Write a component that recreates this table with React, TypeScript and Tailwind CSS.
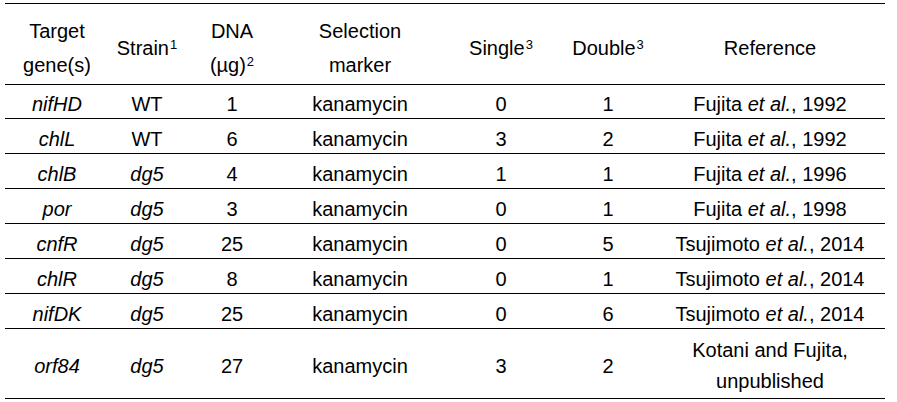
import React from 'react';

type Row = {
  gene: string;
  strain: string;
  dna: string;
  single: string;
  double: string;
  ref: React.ReactNode;
  tall?: boolean;
};

const fujita = (year: string) => (
  <>
    Fujita <i>et al.</i>, {year}
  </>
);

const tsuji = (
  <>
    Tsujimoto <i>et al.</i>, 2014
  </>
);

const rows: Row[] = [
  { gene: 'nifHD', strain: 'WT', dna: '1', single: '0', double: '1', ref: fujita('1992') },
  { gene: 'chlL', strain: 'WT', dna: '6', single: '3', double: '2', ref: fujita('1992') },
  { gene: 'chlB', strain: 'dg5', dna: '4', single: '1', double: '1', ref: fujita('1996') },
  { gene: 'por', strain: 'dg5', dna: '3', single: '0', double: '1', ref: fujita('1998') },
  { gene: 'cnfR', strain: 'dg5', dna: '25', single: '0', double: '5', ref: tsuji },
  { gene: 'chlR', strain: 'dg5', dna: '8', single: '0', double: '1', ref: tsuji },
  { gene: 'nifDK', strain: 'dg5', dna: '25', single: '0', double: '6', ref: tsuji },
  {
    gene: 'orf84',
    strain: 'dg5',
    dna: '27',
    single: '3',
    double: '2',
    ref: (
      <span className="block leading-[31px]">
        Kotani and Fujita,
        <br />
        unpublished
      </span>
    ),
    tall: true,
  },
];

function Sup({ n }: { n: string }) {
  return <sup className="text-[13px] leading-none -top-[6px] ml-[1px]">{n}</sup>;
}

export default function App() {
  return (
    <div className="w-[897px] h-[402px] bg-white text-black font-['Liberation_Sans',Arial,sans-serif] text-[20px] leading-[24px] pl-[5px] pt-[3px]">
      <table className="w-[880px] table-fixed border-collapse text-center">
        <colgroup>
          <col className="w-[104px]" />
          <col className="w-[76px]" />
          <col className="w-[94px]" />
          <col className="w-[162px]" />
          <col className="w-[120px]" />
          <col className="w-[94px]" />
          <col className="w-[230px]" />
        </colgroup>
        <thead>
          <tr className="border-t border-b border-black h-[81px] leading-[34px]">
            <th className="font-normal pt-[8px]">
              Target
              <br />
              gene(s)
            </th>
            <th className="font-normal pt-[8px]">
              Strain<Sup n="1" />
            </th>
            <th className="font-normal pt-[8px]">
              DNA
              <br />
              (µg)<Sup n="2" />
            </th>
            <th className="font-normal pt-[8px]">
              Selection
              <br />
              marker
            </th>
            <th className="font-normal pt-[8px]">
              Single<Sup n="3" />
            </th>
            <th className="font-normal pt-[8px]">
              Double<Sup n="3" />
            </th>
            <th className="font-normal pt-[8px]">Reference</th>
          </tr>
        </thead>
        <tbody>
          {rows.map((r, i) => (
            <tr
              key={r.gene}
              className={`border-b border-black ${r.tall ? 'h-[70px]' : i === 0 ? 'h-[34px]' : 'h-[35px]'}`}
            >
              <td className="italic pt-[5px]">{r.gene}</td>
              <td className={`pt-[5px] ${r.strain === 'dg5' ? 'italic' : ''}`}>{r.strain}</td>
              <td className="pt-[5px]">{r.dna}</td>
              <td className="pt-[5px]">kanamycin</td>
              <td className="pt-[5px]">{r.single}</td>
              <td className="pt-[5px]">{r.double}</td>
              <td className="pt-[5px]">{r.ref}</td>
            </tr>
          ))}
        </tbody>
      </table>
    </div>
  );
}
